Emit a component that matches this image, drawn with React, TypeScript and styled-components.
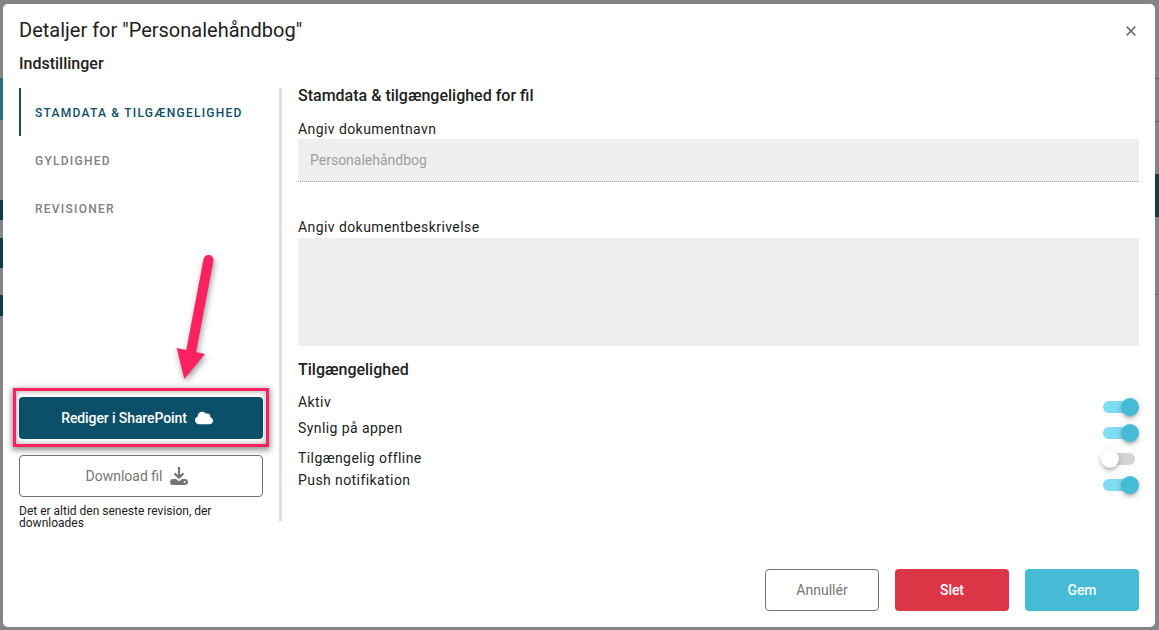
import styled, { createGlobalStyle } from 'styled-components';
import { FaCloud } from 'react-icons/fa';

const GlobalStyle = createGlobalStyle`
  html, body {
    margin: 0;
    padding: 0;
    height: 100%;
    overflow: hidden;
    font-family: Roboto, "Liberation Sans", sans-serif;
  }
  * {
    box-sizing: border-box;
  }
`;

const Backdrop = styled.div`
  position: relative;
  width: 1159px;
  height: 630px;
  padding: 4px 4px 3px 3px;
  background: #858585;
  overflow: hidden;
`;

// bits of the page behind the dialog, showing at its edges
const BehindStrip = styled.div<{ $side: 'left' | 'right'; $top: number; $height: number; $color: string }>`
  position: absolute;
  ${p => p.$side}: 0;
  top: ${p => p.$top}px;
  width: 6px;
  height: ${p => p.$height}px;
  background: ${p => p.$color};
`;

const Modal = styled.div`
  position: relative;
  display: flex;
  flex-direction: column;
  width: 100%;
  height: 100%;
  padding: 0 16px 16px;
  background: #fff;
  border-radius: 5px;
`;

const Header = styled.header`
  display: flex;
  align-items: center;
  justify-content: space-between;
  height: 52px;
`;

const Title = styled.h1`
  margin: 0;
  font-size: 20px;
  font-weight: 400;
  color: #212121;
`;

const CloseButton = styled.button`
  display: flex;
  align-items: center;
  justify-content: center;
  width: 16px;
  height: 16px;
  margin-top: 2px;
  padding: 0;
  border: 0;
  background: none;
  color: #757575;
`;

const SubTitle = styled.h2`
  margin: 0;
  height: 32px;
  font-size: 16px;
  line-height: 16px;
  font-weight: 500;
  color: #212121;
`;

const Body = styled.div`
  display: flex;
  height: 441px;
`;

const Sidebar = styled.aside`
  display: flex;
  flex-direction: column;
  width: 260px;
  padding-right: 16px;
`;

const Nav = styled.nav`
  display: flex;
  flex-direction: column;
`;

const NavItem = styled.a<{ $active?: boolean }>`
  display: flex;
  align-items: center;
  height: 48px;
  padding: 2px 0 0 14px;
  border-left: 2px solid ${p => (p.$active ? '#0b5068' : 'transparent')};
  font-size: 12px;
  font-weight: 500;
  letter-spacing: 1.25px;
  text-transform: uppercase;
  color: ${p => (p.$active ? '#0b5068' : '#808080')};
`;

const SideActions = styled.div`
  display: flex;
  flex-direction: column;
  margin-top: auto;
`;

const Button = styled.button<{ $variant: 'outline' | 'primary' | 'danger' | 'info' }>`
  display: flex;
  align-items: center;
  justify-content: center;
  gap: 8px;
  height: 42px;
  padding: 0;
  border-radius: 4px;
  border: ${p => (p.$variant === 'outline' ? '1px solid #757575' : '0')};
  font-family: inherit;
  font-size: 14px;
  font-weight: ${p => (p.$variant === 'outline' ? 400 : 500)};
  letter-spacing: ${p => (p.$variant === 'outline' ? '0' : '-0.1px')};
  color: ${p => (p.$variant === 'outline' ? '#757575' : '#fff')};
  background: ${p =>
    ({ outline: '#fff', primary: '#0b5068', danger: '#dc3545', info: '#45bbd6' })[p.$variant]};
`;

const WideButton = styled(Button)`
  width: 100%;
  padding-right: 8px;
`;

const FooterButton = styled(Button)`
  width: 114px;
`;

const Highlighted = styled.div`
  position: relative;
  margin-bottom: 16px;

  &::after {
    content: '';
    position: absolute;
    inset: -9px -6px -8px -6px;
    border: 3px solid #fb2160;
    box-shadow:
      0 2px 6px 1px rgba(0, 0, 0, 0.45),
      inset 0 0 5px 1px rgba(0, 0, 0, 0.28);
    pointer-events: none;
  }
`;

const Arrow = styled.svg`
  position: absolute;
  left: 172px;
  top: 248px;
  width: 48px;
  height: 140px;
  overflow: visible;
  filter: drop-shadow(1px 3px 3px rgba(0, 0, 0, 0.4));
`;

const Hint = styled.p`
  margin: 8px 0 0;
  font-size: 12px;
  line-height: 12px;
  color: #212121;
`;

const Divider = styled.div`
  flex: none;
  width: 3px;
  height: 433px;
  background: #e0e0e0;
`;

const Content = styled.section`
  flex: 1;
  display: flex;
  flex-direction: column;
  padding-left: 16px;
`;

const SectionTitle = styled.h3<{ $gap: number }>`
  margin: 0 0 ${p => p.$gap}px;
  font-size: 16px;
  line-height: 16px;
  font-weight: 500;
  color: #212121;
`;

const FieldLabel = styled.label`
  display: block;
  height: 20px;
  font-size: 14px;
  line-height: 20px;
  letter-spacing: 0.42px;
  color: #212121;
`;

const TextInput = styled.div`
  display: flex;
  align-items: center;
  height: 43px;
  margin-bottom: 35px;
  padding-left: 12px;
  background: #eee;
  border-bottom: 1px dotted #a0a0a0;
  font-size: 14px;
  color: #9e9e9e;
`;

const TextArea = styled.div`
  height: 108px;
  margin: 1px 0 16px;
  background: #eee;
`;

const ToggleRow = styled.div`
  display: flex;
  align-items: center;
  justify-content: space-between;
  height: 26px;
`;

const ToggleLabel = styled.span<{ $lift: number }>`
  padding-bottom: ${p => p.$lift}px;
  font-size: 14px;
  line-height: 16px;
  letter-spacing: 0.42px;
  color: #212121;
`;

const Toggle = styled.span<{ $on?: boolean }>`
  position: relative;
  display: block;
  width: 32px;
  height: 12px;
  margin-right: 4px;
  border-radius: 6px;
  background: ${p => (p.$on ? '#7fdcf2' : '#d4d4d4')};

  &::after {
    content: '';
    position: absolute;
    top: -3px;
    left: ${p => (p.$on ? '18px' : '-2px')};
    width: 18px;
    height: 18px;
    border-radius: 50%;
    background: ${p => (p.$on ? '#45bbd6' : '#fff')};
    box-shadow:
      0 3px 3px -2px rgba(0, 0, 0, 0.2),
      0 3px 4px rgba(0, 0, 0, 0.14),
      0 1px 8px rgba(0, 0, 0, 0.12);
  }
`;

const Footer = styled.footer`
  display: flex;
  justify-content: flex-end;
  gap: 16px;
  margin-top: auto;
`;

const toggles = [
  { label: 'Aktiv', on: true, lift: 10 },
  { label: 'Synlig på appen', on: true, lift: 10 },
  { label: 'Tilgængelig offline', on: false, lift: 2 },
  { label: 'Push notifikation', on: true, lift: 10 },
];

export default function App() {
  return (
    <>
      <GlobalStyle />
      <Backdrop>
        <BehindStrip $side="left" $top={78} $height={42} $color="#2b6d7c" />
        <BehindStrip $side="left" $top={200} $height={20} $color="#0b3f4c" />
        <BehindStrip $side="left" $top={238} $height={30} $color="#0b3f4c" />
        <BehindStrip $side="left" $top={295} $height={21} $color="#0b3f4c" />
        <BehindStrip $side="right" $top={78} $height={1} $color="#555" />
        <BehindStrip $side="right" $top={121} $height={1} $color="#555" />
        <BehindStrip $side="right" $top={174} $height={43} $color="#0b3f4c" />
        <BehindStrip $side="right" $top={294} $height={1} $color="#6a6a6a" />
        <Modal>
          <Header>
            <Title>Detaljer for "Personalehåndbog"</Title>
            <CloseButton aria-label="Luk">
              <svg width="10" height="10" viewBox="0 0 10 10" fill="none" stroke="currentColor" strokeWidth="1.8">
                <path d="M0.7 0.7 9.3 9.3M9.3 0.7 0.7 9.3" />
              </svg>
            </CloseButton>
          </Header>
          <SubTitle>Indstillinger</SubTitle>
          <Body>
            <Sidebar>
              <Nav>
                <NavItem $active>Stamdata &amp; tilgængelighed</NavItem>
                <NavItem>Gyldighed</NavItem>
                <NavItem>Revisioner</NavItem>
              </Nav>
              <SideActions>
                <Highlighted>
                  <WideButton $variant="primary">
                    Rediger i SharePoint <FaCloud size={18} />
                  </WideButton>
                </Highlighted>
                <WideButton $variant="outline">
                  Download fil
                  <svg width="18" height="18" viewBox="0 0 18 18">
                    <path d="M9 0v10.5M4.6 6.4 9 10.8l4.4-4.4" fill="none" stroke="currentColor" strokeWidth="2.2" />
                    <path
                      d="M3 12h3l3 2.2L12 12h3a3 3 0 0 1 0 6H3a3 3 0 0 1 0-6z"
                      fill="currentColor"
                    />
                    <circle cx="14.6" cy="15" r="0.9" fill="#fff" />
                  </svg>
                </WideButton>
                <Hint>Det er altid den seneste revision, der downloades</Hint>
              </SideActions>
            </Sidebar>
            <Divider />
            <Content>
              <SectionTitle $gap={15}>Stamdata &amp; tilgængelighed for fil</SectionTitle>
              <FieldLabel>Angiv dokumentnavn</FieldLabel>
              <TextInput>Personalehåndbog</TextInput>
              <FieldLabel>Angiv dokumentbeskrivelse</FieldLabel>
              <TextArea />
              <SectionTitle $gap={16}>Tilgængelighed</SectionTitle>
              {toggles.map(t => (
                <ToggleRow key={t.label}>
                  <ToggleLabel $lift={t.lift}>{t.label}</ToggleLabel>
                  <Toggle $on={t.on} />
                </ToggleRow>
              ))}
            </Content>
          </Body>
          <Footer>
            <FooterButton $variant="outline">Annullér</FooterButton>
            <FooterButton $variant="danger">Slet</FooterButton>
            <FooterButton $variant="info">Gem</FooterButton>
          </Footer>
          <Arrow viewBox="0 0 48 140">
            <path d="M33.5 8 L16 100" fill="none" stroke="#fb2160" strokeWidth="10" strokeLinecap="round" />
            <path d="M1.7 96 L30 102 L9.3 127 Z" fill="#fb2160" />
          </Arrow>
        </Modal>
      </Backdrop>
    </>
  );
}
